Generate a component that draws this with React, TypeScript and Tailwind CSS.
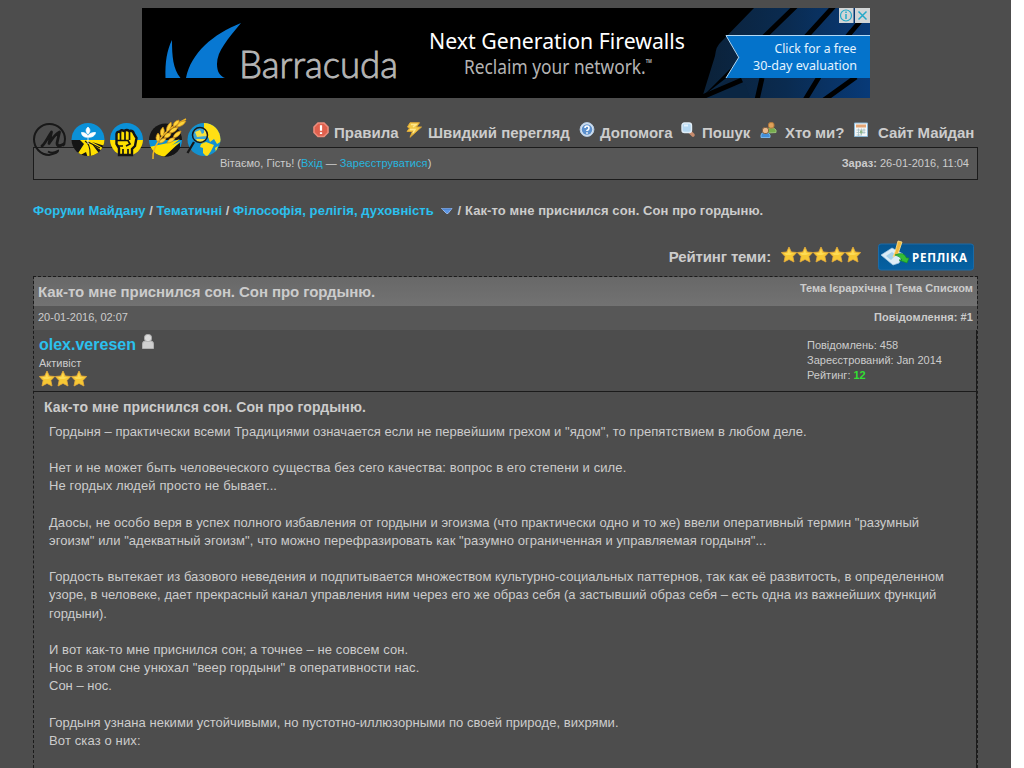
import React from "react";

const Banner = () => (
  <svg className="block" width="728" height="90" viewBox="142 8 728 90">
    <defs>
      <linearGradient id="art" x1="702" y1="0" x2="870" y2="0" gradientUnits="userSpaceOnUse">
        <stop offset="0" stopColor="#0b2138" />
        <stop offset=".5" stopColor="#0a2b50" />
        <stop offset="1" stopColor="#083a78" />
      </linearGradient>
    </defs>
    <rect x="142" y="8" width="728" height="90" fill="#000" />
    <path d="M165.500 78C165 62 167 50 172 40C172 56 173 69 180.500 78Z" fill="#0878d2" />
    <path d="M186 78C191 53 213 34 241 23C228 39 217 51 217 64C217 72 220 76 225 78Z" fill="#0878d2" />
    <text x="239" y="78" textLength="159" lengthAdjust="spacingAndGlyphs" fill="#b4b4b4" stroke="#b4b4b4" strokeWidth=".9" fontFamily="Lato, sans-serif" fontWeight="300" fontSize="38">Barracuda</text>
    <text x="429" y="49" textLength="256" lengthAdjust="spacingAndGlyphs" fill="#fff" fontFamily="'Noto Sans', sans-serif" fontSize="22.500">Next Generation Firewalls</text>
    <text x="464" y="74" textLength="188" lengthAdjust="spacingAndGlyphs" fill="#b4b4b4" fontFamily="'Noto Sans', sans-serif" fontSize="19">Reclaim your network.<tspan dy="-11" fontSize="4.500" fontWeight="700">TM</tspan></text>
    <path d="M754 8H870V98H702L715 56Q716 46 721 42Z" fill="url(#art)" />
    <path d="M703 96L738 58V70L711 94L745 84L750 98H702Z" fill="#0a2643" />
    <path d="M703 96L739 60V68Z" fill="#000" />
    <path d="M797 5L762 39M835 5L805 38M863 18L846 38M700 98L742 80M762 78L757 100M819 77L805 100M856 77L824 100" stroke="#000" strokeWidth="5" fill="none" />
    <path d="M726 35.500H870V78H726L739 57Z" fill="#0473cb" />
    <path d="M738.500 57L726 35.500H870M739 57L726 78" fill="none" stroke="#b2d9f5" strokeWidth="1" />
    <text x="774.500" y="53" textLength="82" lengthAdjust="spacingAndGlyphs" fill="#e4f4ff" fontFamily="'Noto Sans', sans-serif" fontSize="13">Click for a free</text>
    <text x="753" y="70" textLength="104" lengthAdjust="spacingAndGlyphs" fill="#e4f4ff" fontFamily="'Noto Sans', sans-serif" fontSize="13">30-day evaluation</text>
    <path d="M839 8H853.500V23H839ZM855 8H870V23H855Z" fill="#d2d5d6" />
    <circle cx="846" cy="15.500" r="5.500" fill="none" stroke="#24a9c9" strokeWidth="1.200" />
    <path d="M846 14V19M846 11.500V13M858.500 11.500L866.500 19.500M866.500 11.500L858.500 19.500" stroke="#24a9c9" strokeWidth="1.500" />
  </svg>
);

const Badges = () => (
  <svg className="block" width="190" height="43" viewBox="31 118 190 43">
    <defs>
      <clipPath id="c1"><circle cx="88" cy="139.500" r="16.500" /></clipPath>
      <clipPath id="c2"><circle cx="126.500" cy="139.500" r="16.500" /></clipPath>
      <clipPath id="c3"><circle cx="165.500" cy="140" r="16.500" /></clipPath>
      <clipPath id="c4"><circle cx="204" cy="139.500" r="16.500" /></clipPath>
    </defs>
    <path d="M63 146Q65 143 65 139A15.500 15.500 0 1 0 49 155Q58 153 58 151Q52 154 48 151.500" fill="none" stroke="#181818" strokeWidth="2" />
    <path d="M42 146C45 144 48 137 51.500 132L49 143.500C52 139 55 134 59.500 132L57 143C57 147 60 146 64 144" fill="none" stroke="#181818" strokeWidth="2.800" strokeLinecap="round" strokeLinejoin="round" />
    <g clipPath="url(#c1)">
      <rect x="71" y="122" width="34" height="18" fill="#0b91d8" />
      <rect x="71" y="140" width="34" height="18" fill="#151515" />
      <path d="M80 140H105V146L92 142L105 149V153L92 144L101 156L88 158L86 152L75 158L84 144Z" fill="#ffe000" />
      <path d="M85 141Q91 144 90 158M88 142L100 148" fill="none" stroke="#151515" strokeWidth="1.200" />
    </g>
    <path d="M88 144V137M88 137C84 138 81.500 135 81.500 132.500C85 132.500 88 134 88 137ZM88 137C92 138 95.500 135 95.500 132.500C91 132.500 88 134 88 137ZM88 134C85 131 86 129 88 127C90 129 91 131 88 134Z" fill="#fff" stroke="#fff" strokeWidth=".8" />
    <g clipPath="url(#c2)">
      <rect x="109" y="122" width="36" height="18" fill="#0b91d8" />
      <rect x="109" y="140" width="36" height="18" fill="#ffe000" />
    </g>
    <path d="M119 155V148L116.500 144V134Q117 131 120 132Q121 129 124 131Q127 129 129 131Q133 130 134 134L136.500 138L135 146L132 149V155Z" fill="#ffe000" stroke="#141414" strokeWidth="2.400" />
    <path d="M120.500 132V140M125 131V140M129.500 131V140M117 140.500H128L130 144L126 146M118 146H123M123 149V155M128 149V155" fill="none" stroke="#141414" strokeWidth="1.700" />
    <g clipPath="url(#c3)">
      <rect x="148" y="123" width="34" height="17" fill="#151515" />
      <rect x="148" y="140" width="34" height="7" fill="#0b91d8" />
      <rect x="148" y="147" width="34" height="11" fill="#151515" />
      <path d="M149 147L168 143L180 139L166 150L155 154L160 158L153 158Z" fill="#ffe000" />
      <path d="M156 158L180 143V158Z" fill="#151515" />
      <path d="M150 155L181 141L163 158Z" fill="#ffe000" />
    </g>
    <path d="M153 159Q152 150 160 139T186 119" fill="none" stroke="#efb525" strokeWidth="1.500" />
    <path d="M158 142Q154 138 158 133Q162 137 158 142M162 137Q158 132 163 127Q166 132 162 137M167 132Q165 127 171 122Q173 127 167 132M173 127Q173 121 179 120Q180 124 173 127M159 143Q165 143 166 138Q160 138 159 143M164 138Q171 138 171 133Q165 132 164 138M169 133Q176 133 178 127Q171 127 169 133M176 127Q183 127 186 121Q180 120 176 127M167 143Q173 143 175 138Q169 137 167 143M173 138Q180 137 181 131Q174 132 173 138" fill="#ffd43a" stroke="#c88a18" strokeWidth=".7" />
    <circle cx="204" cy="139.500" r="16.500" fill="#1491cf" />
    <g clipPath="url(#c4)">
      <path d="M204 123H214L222 133V141L217 144L214 139L210 142L208 137L204 135ZM201 144L206 142L214 145L211 151L207 157L203 153V148L200 147ZM196 139L206 139L203 143L197 141ZM195 132L200 130L202 134L205 132L206 136L197 137ZM215 148L218 146L216 152Z" fill="#ffdf14" />
    </g>
    <circle cx="200" cy="135" r="7.500" fill="#d7f4f4" fillOpacity=".2" stroke="#181818" strokeWidth="1.500" />
    <path d="M194 142L187.500 153" stroke="#181818" strokeWidth="2.300" />
  </svg>
);

const IconRules = () => (
  <svg width="16" height="16" viewBox="0 0 16 16">
    <path d="M5 1H11L15 5V10.500L11 14.500H5L1 10.500V5Z" fill="#e0604d" stroke="#ec8c7c" strokeWidth="1.600" />
    <path d="M8 3.200V8.700M8 10.200V12" stroke="#fff" strokeWidth="2.200" />
  </svg>
);
const IconBolt = () => (
  <svg width="16" height="16" viewBox="0 0 16 16">
    <path d="M4 .7H13.500L10.500 5H15.500L4 15.300L6.500 9.500H1L3.500 6L1.500 5Z" fill="#f2c847" stroke="#dba737" />
    <path d="M5 2.500H10L7 5M4 7.500H9L7 11" fill="none" stroke="#ffe88a" strokeWidth="1.500" />
  </svg>
);
const IconHelp = () => (
  <svg width="16" height="16" viewBox="0 0 16 16">
    <circle cx="8" cy="7.500" r="6.900" fill="#d4e1ef" stroke="#b2cae4" />
    <circle cx="8" cy="7.500" r="5.200" fill="#5c90cd" />
    <path d="M6 6Q6 4 8 4T10 6T8 8.500V9M8 10.200V11.700" fill="none" stroke="#fff" strokeWidth="1.600" />
  </svg>
);
const IconSearch = () => (
  <svg width="16" height="16" viewBox="0 0 16 16">
    <path d="M9.500 9.500L13 13" stroke="#c68b6d" strokeWidth="3.600" strokeLinecap="round" />
    <rect x="2" y="1" width="9.500" height="9.500" rx="2.500" fill="#b5d8f2" stroke="#e0edf7" strokeWidth="1.400" />
    <path d="M4 3.500H8" stroke="#e3f3ff" strokeWidth="2" />
  </svg>
);
const IconPeople = () => (
  <svg width="17" height="17" viewBox="0 0 17 17">
    <path d="M7.500 11V8Q8 5.500 11 5.500T16 8V10.500Z" fill="#76ac4d" stroke="#98c376" />
    <rect x="8.500" y=".6" width="5.500" height="5.500" rx="2" fill="#dfa25a" stroke="#b3783a" />
    <path d="M1 15.500V13Q1 10.500 5 10.500T10 13V15.500Z" fill="#438ed6" stroke="#77b4e9" />
    <rect x="2.500" y="5.500" width="6" height="6" rx="2.300" fill="#eab98c" stroke="#805f40" />
  </svg>
);
const IconCalendar = () => (
  <svg width="16" height="16" viewBox="0 0 16 16">
    <path d="M1.500 1H14.500V14.500H1.500Z" fill="#f4f7f8" stroke="#89b6d5" />
    <path d="M3 2.500H13V5.500H3Z" fill="#e3a474" />
    <path d="M3.500 8H12.500M3.500 10.500H12.500M3.500 13H9M5.500 6.500V14M8.500 6.500V13M11 6.500V12" stroke="#a6bfc4" strokeWidth=".8" />
    <path d="M7 8.500H9.500V11.500H7Z" fill="#8fb58a" />
  </svg>
);

const Star = () => (
  <svg width="16" height="18" viewBox="0 0 16 18">
    <path d="M8 1L10.300 6L15.700 6.500L11.900 10.500L13 16L8 13.400L3 16L4.100 10.500L.3 6.500L5.700 6Z" fill="#f6c834" stroke="#e6ab3c" strokeWidth=".8" />
    <path d="M8 3L9 7L13 7.500L9 9L5 9L3 7L6.500 7Z" fill="#fddb55" />
  </svg>
);

const menu: [React.ReactNode, string, string][] = [
  [<IconRules />, "Правила", "w-[93px] gap-[5px]"],
  [<IconBolt />, "Швидкий перегляд", "w-[173px] gap-[6px]"],
  [<IconHelp />, "Допомога", "w-[101px] gap-[5px]"],
  [<IconSearch />, "Пошук", "w-[80px] gap-[6px]"],
  [<IconPeople />, "Хто ми?", "w-[93px] gap-[9px] tracking-[-0.1px]"],
  [<IconCalendar />, "Сайт Майдан", "w-[121px] gap-[9px] tracking-[-0.1px]"],
];

const lines: [string, string][] = [
  ["Гордыня – практически всеми Традициями означается если не первейшим грехом и \"ядом\", то препятствием в любом деле.", "tracking-[0.053px]"],
  ["", ""],
  ["Нет и не может быть человеческого существа без сего качества: вопрос в его степени и силе.", "tracking-[0.108px]"],
  ["Не гордых людей просто не бывает...", "tracking-[0.11px]"],
  ["", ""],
  ["Даосы, не особо веря в успех полного избавления от гордыни и эгоизма (что практически одно и то же) ввели оперативный термин \"разумный", "tracking-[0.053px]"],
  ["эгоизм\" или \"адекватный эгоизм\", что можно перефразировать как \"разумно ограниченная и управляемая гордыня\"...", "tracking-[0.06px]"],
  ["", ""],
  ["Гордость вытекает из базового неведения и подпитывается множеством культурно-социальных паттернов, так как её развитость, в определенном", "tracking-[0.058px]"],
  ["узоре, в человеке, дает прекрасный канал управления ним через его же образ себя (а застывший образ себя – есть одна из важнейших функций", "tracking-[0.045px]"],
  ["гордыни).", ""],
  ["", ""],
  ["И вот как-то мне приснился сон; а точнее – не совсем сон.", "tracking-[0.08px]"],
  ["Нос в этом сне унюхал \"веер гордыни\" в оперативности нас.", "tracking-[0.09px]"],
  ["Сон – нос.", ""],
  ["", ""],
  ["Гордыня узнана некими устойчивыми, но пустотно-иллюзорными по своей природе, вихрями.", "tracking-[0.03px]"],
  ["Вот сказ о них:", "tracking-[0.13px]"],
];

export default function App() {
  return (
    <div className="h-[768px] w-[1024px] overflow-hidden bg-white font-['Liberation_Sans',Arial,sans-serif] text-[13px] text-[#cccccc]">
      <div className="flex h-full w-[1011px] flex-col bg-[#4d4d4d] pl-[33px] pr-[33px] pt-2">
        <div className="ml-[109px] h-[90px] w-[728px] shrink-0">
          <Banner />
        </div>

        <header className="relative h-[82px] shrink-0 pt-[24px]">
          <nav className="ml-[280px] flex h-[25px] text-[15px] font-bold leading-[18px] whitespace-nowrap">
            {menu.map(([icon, label, cls]) => (
              <a key={label} className={`flex shrink-0 items-start ${cls}`}>
                <span className="w-4 shrink-0">{icon}</span>
                <span className="pt-[2px]">{label}</span>
              </a>
            ))}
          </nav>
          <div className="flex h-[33px] items-center justify-between border border-[#1b1b1b] bg-[#575757] pl-[186px] pr-2 text-[11px]">
            <span className="tracking-[0.02px]">
              Вітаємо, Гість! (<a className="text-[#27b5df]">Вхід</a> — <a className="text-[#27b5df] tracking-[0.06px]">Зареєструватися</a>)
            </span>
            <span><b>Зараз:</b> 26-01-2016, 11:04</span>
          </div>
          <div className="absolute -left-[2px] top-5"><Badges /></div>
        </header>

        <div className="mt-[23px] flex h-4 shrink-0 items-center whitespace-pre text-[13px] font-bold leading-4">
          <a className="text-[#2bc0ee] tracking-[0.05px]">Форуми Майдану</a> / <a className="text-[#2bc0ee] tracking-[0.16px]">Тематичні</a> / <a className="text-[#2bc0ee] tracking-[0.09px]">Філософія, релігія, духовність</a>
          <svg className="ml-[6px]" width="14" height="10" viewBox="0 0 14 10">
            <path d="M1.500 2.500H12L8 7.500H6.500Z" fill="#5c96e5" stroke="#a9c8f5" strokeWidth=".8" />
            <path d="M2 3H11.500" stroke="#4579c2" />
          </svg>
          <span className="tracking-[0.085px]"> / Как-то мне приснился сон. Сон про гордыню.</span>
        </div>

        <div className="flex h-[57px] shrink-0 items-start justify-end pr-1 pt-[21px]">
          <span className="mt-[8px] text-[15px] font-bold leading-[18px] tracking-[-0.14px]">Рейтинг теми:</span>
          <span className="ml-[10px] mt-[6px] flex"><Star /><Star /><Star /><Star /><Star /></span>
          <svg className="ml-[17px] block" width="96" height="31" viewBox="0 0 96 31">
            <defs>
              <linearGradient id="btn" x1="0" y1="0" x2="0" y2="1">
                <stop offset="0" stopColor="#06558f" />
                <stop offset="1" stopColor="#0561a3" />
              </linearGradient>
            </defs>
            <rect x=".5" y="4" width="95" height="26" rx="2.500" fill="url(#btn)" stroke="#1c6ba6" />
            <path d="M3 15L14 8L25 14L21 23L15 25Z" fill="#dcecf6" stroke="#a5cbe5" strokeWidth=".7" />
            <path d="M8 16L14 12L18 15L13 20Z" fill="#a5d0ea" />
            <path d="M15 17L17 12L20 1L24 2L20 14Z" fill="#f0b83e" stroke="#ffe28b" strokeWidth=".8" />
            <path d="M17 15Q26 11 28.500 18H31L29 23L21 20H24Q22 16 17 15Z" fill="#35bd36" stroke="#168e2b" strokeWidth=".7" />
            <text x="34" y="21.500" textLength="55" lengthAdjust="spacing" fill="#fff" fontFamily="'Noto Sans', sans-serif" fontWeight="700" fontSize="11.500">РЕПЛІКА</text>
          </svg>
        </div>

        <main className="flex min-h-0 w-[945px] flex-1 flex-col border-x border-t border-dashed border-[#1b1b1b]">
          <div className="flex h-[29px] shrink-0 justify-between bg-linear-to-b from-[#686868] to-[#727272] px-1 font-bold">
            <h1 className="pt-[6px] text-[15px] leading-[18px] tracking-[-0.07px]">Как-то мне приснился сон. Сон про гордыню.</h1>
            <span className="pt-[5px] text-[11px] leading-[13px] tracking-[0.03px]">Тема Ієрархічна | Тема Списком</span>
          </div>
          <div className="flex h-6 shrink-0 justify-between bg-[#575757] px-1 pt-[5px] text-[11px] leading-[13px]">
            <span>20-01-2016, 02:07</span>
            <b className="tracking-[0.08px]">Повідомлення: #1</b>
          </div>
          <section className="flex h-[62px] shrink-0 justify-between border-b border-r border-[#1b1b1b] pl-[5px]">
            <div>
              <div className="flex h-[26px] items-start">
                <b className="pt-[6px] text-[16px] leading-[18px] text-[#2bc0ee]">olex.veresen</b>
                <svg className="ml-[5px] mt-[3px]" width="14" height="18" viewBox="0 0 14 18">
                  <path d="M1.500 15.500V11Q1.500 8 4 8H10Q12.500 8 12.500 11V15.500Z" fill="#cfcfcf" stroke="#b0b0b0" />
                  <rect x="3.500" y="1.500" width="7" height="7" rx="3" fill="#dcdcdc" stroke="#b0b0b0" />
                </svg>
              </div>
              <div className="text-[11px] leading-[14px]">Активіст</div>
              <div className="flex"><Star /><Star /><Star /></div>
            </div>
            <div className="w-[169px] pt-[8px] text-[11px] leading-[15px]">
              <div>Повідомлень: 458</div>
              <div>Зареєстрований: Jan 2014</div>
              <div>Рейтинг: <b className="text-[#32df32]">12</b></div>
            </div>
          </section>
          <article className="min-h-0 flex-1 overflow-hidden border-r border-[#1b1b1b] pl-[10px]">
            <h2 className="pt-[6px] text-[14px] font-bold leading-[18px] tracking-[0.11px]">Как-то мне приснился сон. Сон про гордыню.</h2>
            <div className="whitespace-nowrap pl-[5px] pt-[6.7px] text-[13px] leading-[18.2px]">
              {lines.map(([line, spacing], i) => (
                <p key={i} className={`h-[18.2px] ${spacing}`}>{line}</p>
              ))}
            </div>
          </article>
        </main>
      </div>
    </div>
  );
}
